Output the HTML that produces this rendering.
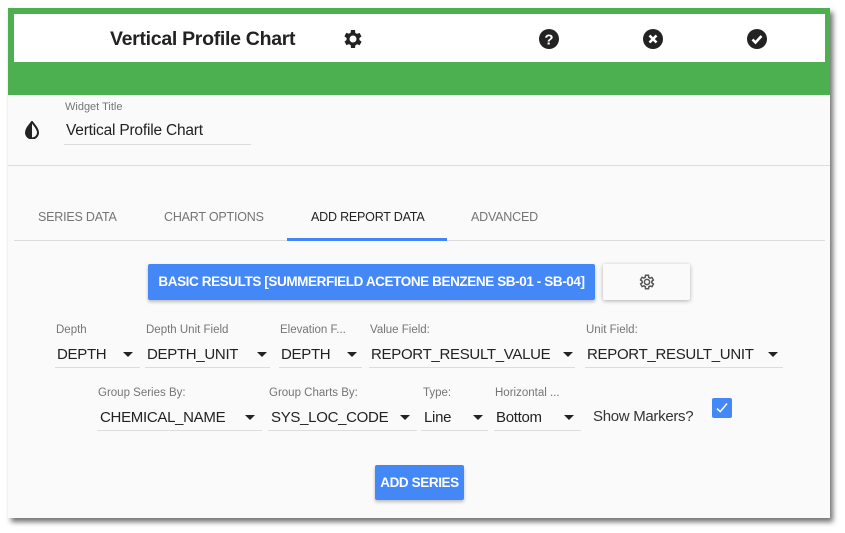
<!DOCTYPE html>
<html><head><meta charset="utf-8"><style>
*{margin:0;padding:0;box-sizing:border-box}
body{width:845px;height:533px;background:#fff;position:relative;overflow:hidden;font-family:"Liberation Sans",sans-serif;color:#212121}
.a{position:absolute;white-space:nowrap}
.panel{position:absolute;left:8px;top:8px;width:822px;height:510px;background:#fafafa;box-shadow:3px 4px 5px rgba(0,0,0,.55)}
.lbl{font-size:11.5px;color:#757575}
.val{font-size:15px;color:#222;letter-spacing:-0.3px}
.ul{position:absolute;height:1px;background:#ddd}
.arr{position:absolute;width:0;height:0;border-left:5px solid transparent;border-right:5px solid transparent;border-top:5px solid #222}
.tab{font-size:12.5px;color:#757575;letter-spacing:-0.2px}
</style></head><body>
<div class="panel"></div>
<div class="a" style="left:8px;top:8px;width:822px;height:87px;background:#4caf50"></div>
<div class="a" style="left:14px;top:14px;width:811px;height:48px;background:#fff"></div>
<div class="a" style="left:110px;top:28px;font-size:19.5px;font-weight:bold;color:#222;letter-spacing:-0.3px">Vertical Profile Chart</div>
<svg class="a" style="left:341px;top:27px" width="24" height="24" viewBox="0 0 24 24"><path fill="#222" d="M19.4 13a7.5 7.5 0 0 0 0-2l2.1-1.6-2-3.5-2.5 1a7.3 7.3 0 0 0-1.7-1L15 3h-4l-.4 2.7a7.3 7.3 0 0 0-1.7 1l-2.5-1-2 3.5L6.6 11a7.5 7.5 0 0 0 0 2l-2.1 1.6 2 3.5 2.5-1a7.3 7.3 0 0 0 1.7 1L11 21h4l.4-2.7a7.3 7.3 0 0 0 1.7-1l2.5 1 2-3.5zM13 15.5a3.5 3.5 0 1 1 0-7 3.5 3.5 0 0 1 0 7z" transform="translate(-1 0)"/></svg>
<svg class="a" style="left:539px;top:29px" width="20" height="20" viewBox="0 0 20 20"><circle cx="10" cy="10" r="10" fill="#222"/><text x="10" y="15.5" text-anchor="middle" font-size="15" font-weight="bold" fill="#fff" font-family="Liberation Sans">?</text></svg>
<svg class="a" style="left:643px;top:29px" width="20" height="20" viewBox="0 0 20 20"><circle cx="10" cy="10" r="10" fill="#222"/><path d="M6.5 6.5l7 7M13.5 6.5l-7 7" stroke="#fff" stroke-width="2.6"/></svg>
<svg class="a" style="left:747px;top:29px" width="20" height="20" viewBox="0 0 20 20"><circle cx="10" cy="10" r="10" fill="#222"/><path d="M5.5 10.5l3 3 6-6.5" stroke="#fff" stroke-width="2.6" fill="none"/></svg>

<svg class="a" style="left:24px;top:121px" width="16" height="18" viewBox="0 0 16 18"><path d="M8 1C5 5 2 8 2 11.5a6 6 0 0 0 12 0C14 8 11 5 8 1z" fill="none" stroke="#222" stroke-width="2"/><path d="M8 1C5 5 2 8 2 11.5A6 6 0 0 0 8 17.5z" fill="#222"/></svg>
<div class="a lbl" style="left:65px;top:101px;font-size:11px">Widget Title</div>
<div class="a" style="left:66px;top:122px;font-size:15.5px;color:#222;letter-spacing:-0.2px">Vertical Profile Chart</div>
<div class="ul" style="left:64px;top:144px;width:187px"></div>
<div class="ul" style="left:8px;top:165px;width:822px"></div>

<div class="a tab" style="left:38px;top:210px">SERIES DATA</div>
<div class="a tab" style="left:164px;top:210px">CHART OPTIONS</div>
<div class="a tab" style="left:311px;top:210px;color:#222">ADD REPORT DATA</div>
<div class="a tab" style="left:471px;top:210px">ADVANCED</div>
<div class="ul" style="left:14px;top:240px;width:811px"></div>
<div class="a" style="left:287px;top:238px;width:160px;height:3px;background:#4285f4"></div>

<div class="a" style="left:148px;top:264px;width:447px;height:36px;background:#4488f8;border-radius:2px;box-shadow:0 2px 3px rgba(0,0,0,.25);color:#fff;font-weight:bold;font-size:13.5px;line-height:36px;text-align:center;letter-spacing:-0.4px">BASIC RESULTS [SUMMERFIELD ACETONE BENZENE SB-01 - SB-04]</div>
<div class="a" style="left:603px;top:264px;width:87px;height:36px;background:#fafafa;border-radius:2px;box-shadow:0 1px 4px rgba(0,0,0,.3)"></div>
<svg class="a" style="left:638px;top:273px" width="18" height="18" viewBox="0 0 24 24"><path fill="none" stroke="#555" stroke-width="2" d="M19.4 13a7.5 7.5 0 0 0 0-2l2.1-1.6-2-3.5-2.5 1a7.3 7.3 0 0 0-1.7-1L15 3h-4l-.4 2.7a7.3 7.3 0 0 0-1.7 1l-2.5-1-2 3.5L6.6 11a7.5 7.5 0 0 0 0 2l-2.1 1.6 2 3.5 2.5-1a7.3 7.3 0 0 0 1.7 1L11 21h4l.4-2.7a7.3 7.3 0 0 0 1.7-1l2.5 1 2-3.5zM13 15.5a3.5 3.5 0 1 1 0-7 3.5 3.5 0 0 1 0 7z" transform="translate(-1 0)"/></svg>

<!-- row 1 -->
<div class="a lbl" style="left:56px;top:324px">Depth</div>
<div class="a lbl" style="left:146px;top:324px">Depth Unit Field</div>
<div class="a lbl" style="left:280px;top:324px">Elevation F...</div>
<div class="a lbl" style="left:370px;top:324px">Value Field:</div>
<div class="a lbl" style="left:586px;top:324px">Unit Field:</div>
<div class="a val" style="left:57px;top:346px">DEPTH</div>
<div class="a val" style="left:147px;top:346px">DEPTH_UNIT</div>
<div class="a val" style="left:281px;top:346px">DEPTH</div>
<div class="a val" style="left:371px;top:346px">REPORT_RESULT_VALUE</div>
<div class="a val" style="left:587px;top:346px">REPORT_RESULT_UNIT</div>
<div class="arr" style="left:123px;top:352px"></div>
<div class="arr" style="left:257px;top:352px"></div>
<div class="arr" style="left:347px;top:352px"></div>
<div class="arr" style="left:563px;top:352px"></div>
<div class="arr" style="left:768px;top:352px"></div>
<div class="ul" style="left:55px;top:367px;width:85px"></div>
<div class="ul" style="left:145px;top:367px;width:125px"></div>
<div class="ul" style="left:279px;top:367px;width:83px"></div>
<div class="ul" style="left:369px;top:367px;width:206px"></div>
<div class="ul" style="left:585px;top:367px;width:198px"></div>

<!-- row 2 -->
<div class="a lbl" style="left:98px;top:387px">Group Series By:</div>
<div class="a lbl" style="left:269px;top:387px">Group Charts By:</div>
<div class="a lbl" style="left:423px;top:387px">Type:</div>
<div class="a lbl" style="left:495px;top:387px">Horizontal ...</div>
<div class="a val" style="left:100px;top:409px">CHEMICAL_NAME</div>
<div class="a val" style="left:271px;top:409px">SYS_LOC_CODE</div>
<div class="a val" style="left:424px;top:409px">Line</div>
<div class="a val" style="left:496px;top:409px">Bottom</div>
<div class="a val" style="left:593px;top:408px;color:#333">Show Markers?</div>
<div class="arr" style="left:245px;top:415px"></div>
<div class="arr" style="left:400px;top:415px"></div>
<div class="arr" style="left:473px;top:415px"></div>
<div class="arr" style="left:564px;top:415px"></div>
<div class="ul" style="left:97px;top:430px;width:165px"></div>
<div class="ul" style="left:268px;top:430px;width:149px"></div>
<div class="ul" style="left:421px;top:430px;width:67px"></div>
<div class="ul" style="left:494px;top:430px;width:87px"></div>
<svg class="a" style="left:712px;top:398px" width="20" height="20" viewBox="0 0 20 20"><rect width="20" height="20" rx="2" fill="#4488f8"/><path d="M5 10.5l3.2 3.2L15 5.5" stroke="#fff" stroke-width="1.5" fill="none"/></svg>

<div class="a" style="left:375px;top:465px;width:89px;height:35px;background:#4488f8;border-radius:2px;box-shadow:0 2px 3px rgba(0,0,0,.25);color:#fff;font-weight:bold;font-size:13.5px;line-height:35px;text-align:center;letter-spacing:-0.4px">ADD SERIES</div>
</body></html>
